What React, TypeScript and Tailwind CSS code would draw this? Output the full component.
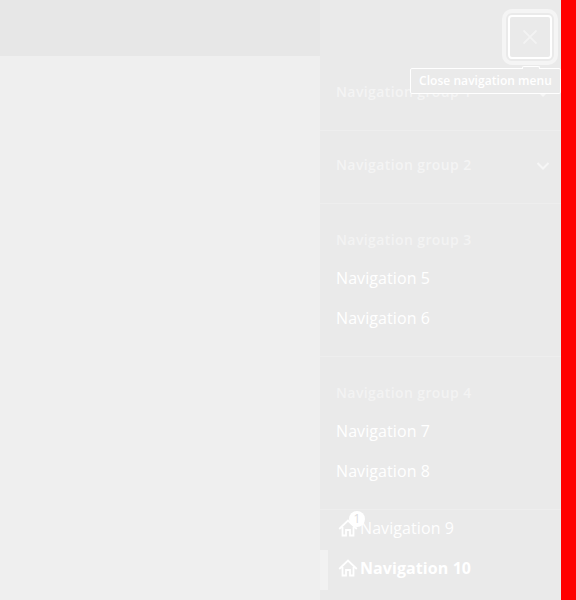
import React from 'react';

function Home() {
  return (
    <svg width="20" height="20" viewBox="0 0 20 20" fill="none" stroke="#fff" strokeWidth="1.8" className="shrink-0">
      <path d="M1.2 11 10 2.5 18.8 11M4.5 9v8.5H8v-5.5h4v5.5h3.5V9" />
    </svg>
  );
}

function GroupTitle({ children }: { children: string }) {
  return <span className="text-[14px] font-semibold leading-6 tracking-[0.4px]">{children}</span>;
}

function CollapsedGroup({ title }: { title: string }) {
  return (
    <button className="flex h-6 w-full items-center justify-between pl-4 pr-[11px] text-[#f4f4f4]">
      <GroupTitle>{title}</GroupTitle>
      <svg width="14" height="10" viewBox="0 0 14 10" fill="none" stroke="#f6f6f6" strokeWidth="2" className="relative top-px">
        <path d="m1.5 2 5.5 5.5L12.5 2" />
      </svg>
    </button>
  );
}

function Group({ title, items }: { title: string; items: string[] }) {
  return (
    <section className="h-[153px] border-b border-[#eeeeee] pt-6">
      <div className="flex h-[30px] items-start pl-4 text-[#f3f3f3]"><GroupTitle>{title}</GroupTitle></div>
      {items.map((item) => (
        <a key={item} className="flex h-10 items-center pl-4 text-[16px] tracking-[0.08px] text-white">{item}</a>
      ))}
    </section>
  );
}

export default function App() {
  return (
    <div className="flex h-[600px] w-[576px] overflow-hidden bg-[#efefef] font-['Open_Sans',sans-serif]">
      <main className="w-[320px]">
        <header className="h-14 bg-[#e7e7e7]" />
      </main>
      <aside className="w-[241px] bg-[#eaeaea]">
        <div className="flex h-[57px] justify-end pr-[9px] pt-[15px]">
          <div className="relative h-11 w-11 shrink-0">
            <button aria-label="Close navigation menu" className="flex h-11 w-11 items-center justify-center rounded-[4px] border-2 border-white outline-4 outline-offset-2 outline-[#f5f5f5]">
              <svg width="14" height="14" viewBox="0 0 14 14" fill="none" stroke="#f3f3f3" strokeWidth="1.8">
                <path d="m.5.5 13 13m0-13-13 13" />
              </svg>
            </button>
            <div role="tooltip" className="absolute left-[-98px] top-[53px] z-10 flex h-[26px] w-[151px] items-center whitespace-nowrap rounded-[2px] border border-white bg-[#eaeaea] pl-2 text-[12px] font-semibold tracking-[0.05px] text-white">
              <span className="absolute left-[111px] top-[-3px] h-[3px] w-[18px] rounded-t-[2px] border border-b-0 border-white bg-[#eaeaea]" />
              Close navigation menu
            </div>
          </div>
        </div>
        <div className="h-[74px] border-b border-[#eeeeee] pt-[23px]"><CollapsedGroup title="Navigation group 1" /></div>
        <div className="h-[73px] border-b border-[#eeeeee] pt-[22px]"><CollapsedGroup title="Navigation group 2" /></div>
        <Group title="Navigation group 3" items={['Navigation 5', 'Navigation 6']} />
        <Group title="Navigation group 4" items={['Navigation 7', 'Navigation 8']} />
        <a className="flex h-10 items-center pb-1 pl-[18px] text-[16px] tracking-[0.08px] text-[#fefefe]">
          <span className="relative mr-[2px]">
            <Home />
            <span className="absolute left-[11px] top-[-7px] flex h-4 w-4 items-center justify-center rounded-full bg-white text-[12px] text-[#dddddd]">1</span>
          </span>
          <span>Navigation 9</span>
        </a>
        <a className="flex h-10 items-center border-l-8 border-[#f2f2f2] pb-1 pl-[10px] text-[16px] font-bold tracking-[0.08px] text-white">
          <span className="mr-[2px]"><Home /></span>
          <span>Navigation 10</span>
        </a>
      </aside>
      <div className="w-[15px] bg-[#ff0000]" />
    </div>
  );
}
